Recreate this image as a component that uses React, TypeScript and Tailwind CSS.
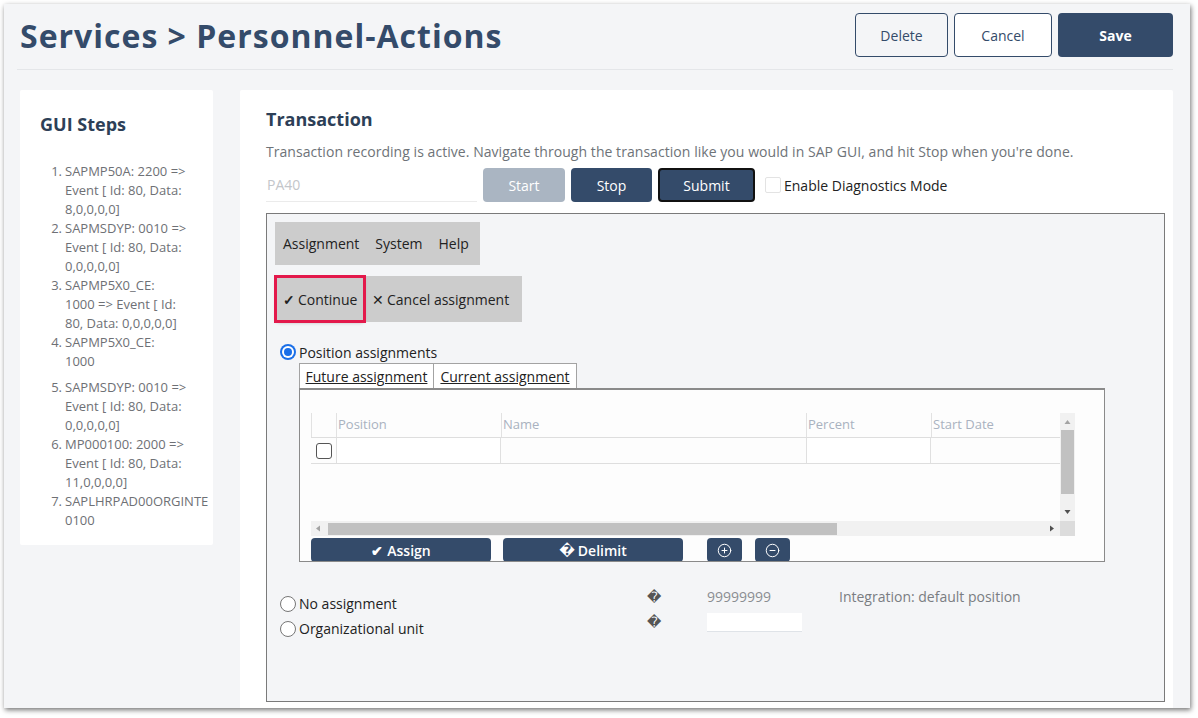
import React from "react";
import { CirclePlus, CircleMinus } from "lucide-react";

const steps: { n: string; lines: string[]; extra?: boolean }[] = [
  { n: "1.", lines: ["SAPMP50A: 2200 =>", "Event [ Id: 80, Data:", "8,0,0,0,0]"] },
  { n: "2.", lines: ["SAPMSDYP: 0010 =>", "Event [ Id: 80, Data:", "0,0,0,0,0]"] },
  { n: "3.", lines: ["SAPMP5X0_CE:", "1000 => Event [ Id:", "80, Data: 0,0,0,0,0]"] },
  { n: "4.", lines: ["SAPMP5X0_CE:", "1000"] },
  { n: "5.", lines: ["SAPMSDYP: 0010 =>", "Event [ Id: 80, Data:", "0,0,0,0,0]"], extra: true },
  { n: "6.", lines: ["MP000100: 2000 =>", "Event [ Id: 80, Data:", "11,0,0,0,0]"] },
  { n: "7.", lines: ["SAPLHRPAD00ORGINTE", "0100"] },
];

function Radio({ checked }: { checked?: boolean }) {
  if (checked) {
    return (
      <div className="w-[16px] h-[16px] rounded-full bg-[#1a6fe8] flex items-center justify-center shrink-0">
        <div className="w-[12px] h-[12px] rounded-full bg-white flex items-center justify-center">
          <div className="w-[8px] h-[8px] rounded-full bg-[#1a6fe8]" />
        </div>
      </div>
    );
  }
  return <div className="w-[16px] h-[16px] rounded-full border border-[#767676] bg-white shrink-0" />;
}

export default function App() {
  return (
    <div className="w-[1198px] h-[718px] bg-white pl-[4px] pt-[4px] overflow-hidden font-['Open_Sans',sans-serif]">
      <div className="w-[1186px] h-[704px] bg-[#f4f5f7] shadow-[1px_2px_5px_rgba(0,0,0,0.55)] pl-[13px] pr-[17px] overflow-hidden">
        {/* Header */}
        <div className="flex justify-between h-[66px] border-b border-[#e4e6e9]">
          <h1 className="ml-[3px] mt-[13px] text-[32px] leading-[38px] tracking-[1px] font-bold text-[#344b6a]">
            Services &gt; Personnel-Actions
          </h1>
          <div className="flex gap-[6px] mt-[9px]">
            <button className="w-[93px] h-[44px] rounded-[4px] border border-[#344b6a] text-[14px] font-medium text-[#344b6a] bg-[#f4f5f7]">
              Delete
            </button>
            <button className="w-[98px] h-[44px] rounded-[4px] border border-[#344b6a] text-[14px] font-medium text-[#344b6a] bg-white">
              Cancel
            </button>
            <button className="w-[115px] h-[44px] rounded-[4px] bg-[#344b6a] text-[14px] font-bold text-white">
              Save
            </button>
          </div>
        </div>

        {/* Body */}
        <div className="flex gap-[27px] mt-[20px]">
          {/* GUI Steps */}
          <div className="ml-[3px] w-[193px] h-[455px] bg-white rounded-[2px] pt-[22px] pl-[20px]">
            <div className="text-[18px] leading-[24px] font-bold text-[#2d3f57]">GUI Steps</div>
            <div className="mt-[26px] text-[13px] leading-[19px] text-[#6e7075]">
              {steps.map((s) => (
                <div key={s.n} className={`flex ${s.extra ? "mt-[7px]" : ""}`}>
                  <div className="w-[25px] pr-[3px] text-right shrink-0">{s.n}</div>
                  <div className="whitespace-nowrap">
                    {s.lines.map((l, i) => (
                      <div key={i}>{l}</div>
                    ))}
                  </div>
                </div>
              ))}
            </div>
          </div>

          {/* Transaction card */}
          <div className="w-[933px] h-[640px] bg-white rounded-[2px] pl-[26px] pt-[17px]">
            <div className="text-[18px] leading-[24px] font-bold text-[#2d3f57]">Transaction</div>
            <div className="mt-[11px] text-[14px] leading-[20px] tracking-[0.05px] text-[#6e7378]">
              Transaction recording is active. Navigate through the transaction like you would in SAP GUI, and hit Stop when you're done.
            </div>
            <div className="mt-[6px] flex items-center">
              <div className="w-[211px] h-[34px] border-b border-[#ebebeb] bg-white flex items-center pl-[1px] text-[14px] text-[#c3c6ca]">
                PA40
              </div>
              <button className="ml-[6px] w-[82px] h-[34px] rounded-[4px] bg-[#aab5c2] text-white text-[14px] font-medium">
                Start
              </button>
              <button className="ml-[6px] w-[81px] h-[34px] rounded-[4px] bg-[#344b6a] text-white text-[14px] font-medium">
                Stop
              </button>
              <button className="ml-[6px] w-[97px] h-[34px] rounded-[4px] bg-[#344b6a] border-2 border-[#111] text-white text-[14px] font-medium">
                Submit
              </button>
              <div className="ml-[10px] w-[16px] h-[16px] rounded-[2px] border border-[#e3e3e3] bg-white" />
              <span className="ml-[3px] text-[14px] text-[#222]">Enable Diagnostics Mode</span>
            </div>

            {/* SAP frame */}
            <div className="mt-[11px] w-[899px] h-[489px] border border-[#7a7a7a] bg-[#f4f5f7] pl-[8px] pt-[8px] text-[#222]">
              {/* menu */}
              <div className="w-[205px] h-[43px] bg-[#cccccc] flex items-center gap-[16px] pl-[8px] text-[14px]">
                <span>Assignment</span>
                <span>System</span>
                <span>Help</span>
              </div>
              {/* toolbar */}
              <div className="mt-[11px] w-[247px] h-[46px] bg-[#cccccc] flex items-center text-[14px]">
                <div className="ml-[2px] w-[86px] h-[42px] outline-[3px] outline-solid outline-[#e3194b] shadow-[0_2px_4px_rgba(0,0,0,0.35)] flex items-center pl-[6px]">
                  <span className="mr-[3px] font-bold">✓</span>Continue
                </div>
                <div className="ml-[9px] flex items-center">
                  <span className="mr-[3px]">✕</span>Cancel assignment
                </div>
              </div>

              {/* position assignments */}
              <div className="mt-[22px] ml-[5px] flex items-center h-[16px]">
                <Radio checked />
                <span className="ml-[3px] text-[14px] leading-[20px] mt-[2px]">Position assignments</span>
              </div>
              <div className="ml-[24px] mt-[3px] flex h-[25px] w-[278px] bg-white border border-[#a3a3a3] border-b-0 text-[14px]">
                <div className="w-[134px] border-r border-[#a3a3a3] flex items-center justify-center">
                  <span className="underline">Future assignment</span>
                </div>
                <div className="flex-1 flex items-center justify-center">
                  <span className="underline">Current assignment</span>
                </div>
              </div>
              <div className="ml-[24px] w-[806px] h-[174px] border border-[#8a8a8a] border-t-2 bg-[#fdfdfd] pl-[11px] pt-[23px] overflow-hidden">
                <div className="flex w-[764px] h-[123px]">
                  <div className="w-[749px] flex flex-col">
                    <div className="flex-1">
                      {/* header */}
                      <div className="flex h-[25px] border-b border-[#dedede] text-[13px] text-[#a9b2c0]">
                        <div className="w-[25px] border-l border-[#e2e2e2]" />
                        <div className="w-[165px] border-l border-[#e2e2e2] pl-[1px] flex items-center">Position</div>
                        <div className="w-[305px] border-l border-[#e2e2e2] pl-[1px] flex items-center">Name</div>
                        <div className="w-[125px] border-l border-[#e2e2e2] pl-[1px] flex items-center">Percent</div>
                        <div className="w-[129px] border-l border-[#e2e2e2] pl-[1px] flex items-center">Start Date</div>
                      </div>
                      {/* row */}
                      <div className="flex h-[26px] border-b border-[#dedede]">
                        <div className="w-[25px] flex items-center pl-[5px]">
                          <div className="w-[16px] h-[16px] rounded-[3px] border border-[#555] bg-white" />
                        </div>
                        <div className="w-[165px] bg-white border-l border-r border-[#e0e0e0]" />
                        <div className="w-[305px]" />
                        <div className="w-[125px] bg-white border-l border-r border-[#e0e0e0]" />
                        <div className="w-[129px]" />
                      </div>
                    </div>
                    {/* h scroll */}
                    <div className="h-[15px] bg-[#f1f1f1] flex items-center relative">
                      <svg className="absolute left-[4px] top-[4px]" width="6" height="7" viewBox="0 0 6 7">
                        <path d="M5 0.5 L1 3.5 L5 6.5 Z" fill="#a3a3a3" />
                      </svg>
                      <div className="ml-[17px] w-[509px] h-[12px] bg-[#c1c1c1]" />
                      <svg className="absolute right-[5px] top-[4px]" width="6" height="7" viewBox="0 0 6 7">
                        <path d="M1 0.5 L5 3.5 L1 6.5 Z" fill="#505050" />
                      </svg>
                    </div>
                  </div>
                  {/* v scroll */}
                  <div className="w-[15px] flex flex-col">
                    <div className="flex-1 bg-[#f1f1f1] relative">
                      <svg className="absolute left-[4px] top-[6px]" width="7" height="6" viewBox="0 0 7 6">
                        <path d="M0.5 5 L3.5 1 L6.5 5 Z" fill="#a3a3a3" />
                      </svg>
                      <div className="absolute left-[1px] top-[17px] w-[13px] h-[64px] bg-[#c1c1c1]" />
                      <svg className="absolute left-[4px] bottom-[6px]" width="7" height="6" viewBox="0 0 7 6">
                        <path d="M0.5 1 L3.5 5 L6.5 1 Z" fill="#505050" />
                      </svg>
                    </div>
                    <div className="h-[15px] bg-[#dcdcdc]" />
                  </div>
                </div>
                {/* buttons */}
                <div className="mt-[2px] flex text-white text-[14px] font-semibold">
                  <button className="w-[180px] h-[24px] rounded-[4px] bg-[#344b6a] flex items-center justify-center">
                    <span className="mr-[4px]">✔</span>Assign
                  </button>
                  <button className="ml-[12px] w-[180px] h-[24px] rounded-[4px] bg-[#344b6a] flex items-center justify-center">
                    <span className="mr-[3px] font-['DejaVu_Sans']">{"\uFFFD"}</span>Delimit
                  </button>
                  <button className="ml-[24px] w-[35px] h-[24px] rounded-[4px] bg-[#344b6a] flex items-center justify-center">
                    <CirclePlus size={15} strokeWidth={1.6} />
                  </button>
                  <button className="ml-[13px] w-[35px] h-[24px] rounded-[4px] bg-[#344b6a] flex items-center justify-center">
                    <CircleMinus size={15} strokeWidth={1.6} />
                  </button>
                </div>
              </div>

              {/* other radios */}
              <div className="mt-[25px] ml-[5px] flex items-start h-[25px] text-[14px]">
                <div className="w-[367px] mt-[6px] flex items-center">
                  <Radio />
                  <span className="ml-[3px] leading-[20px] mt-[1px]">No assignment</span>
                </div>
                <div className="w-[60px] leading-[20px] text-[#555] font-['DejaVu_Sans']">{"\uFFFD"}</div>
                <div className="w-[132px] leading-[20px] text-[#8a8d92]">99999999</div>
                <div className="leading-[20px] text-[#7a7d82]">Integration: default position</div>
              </div>
              <div className="ml-[5px] flex items-start h-[25px] text-[14px]">
                <div className="w-[367px] mt-[6px] flex items-center">
                  <Radio />
                  <span className="ml-[3px] leading-[20px] mt-[1px]">Organizational unit</span>
                </div>
                <div className="w-[60px] leading-[20px] text-[#555] font-['DejaVu_Sans']">{"\uFFFD"}</div>
                <div className="mt-[1px] w-[95px] h-[19px] bg-white border-b border-[#dfe3e8]" />
              </div>
            </div>
          </div>
        </div>
      </div>
    </div>
  );
}
